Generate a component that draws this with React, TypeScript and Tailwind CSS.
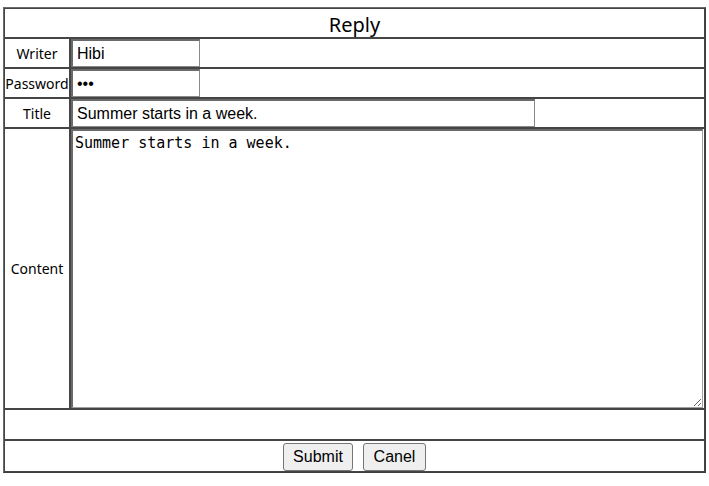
import React from "react";

const cell = "border border-[#454545] p-0";
const label =
  "border border-[#454545] p-0 w-[66px] text-center text-[14px] text-black whitespace-nowrap";
const inputCls =
  "block h-[28px] border-t-2 border-l-2 border-r border-b border-t-[#6a6a6a] border-l-[#6a6a6a] border-r-[#8a8a8a] border-b-[#8a8a8a] bg-white px-[4px] text-[16px] text-black outline-none [font-family:'Liberation_Sans',Arial,sans-serif]";

export default function App() {
  return (
    <div className="bg-white w-[709px] h-[486px] pt-[7px] pl-[3px] [font-family:'Noto_Sans',sans-serif]">
      <table className="w-[703px] border-separate border-spacing-0 border border-t-[#6a6a6a] border-l-[#6a6a6a] border-r-[#3c3c3c] border-b-[#3c3c3c]">
        <tbody>
          <tr>
            <td colSpan={2} className={`${cell} h-[30px] pt-[3px] text-center text-[20px] leading-[25px] text-black`}>
              Reply
            </td>
          </tr>
          <tr>
            <td className={`${label} h-[30px]`}>Writer</td>
            <td className={cell}>
              <input className={`${inputCls} w-[129px]`} defaultValue="Hibi" />
            </td>
          </tr>
          <tr>
            <td className={`${label} h-[30px]`}>Password</td>
            <td className={cell}>
              <input type="password" className={`${inputCls} w-[129px]`} defaultValue="123" />
            </td>
          </tr>
          <tr>
            <td className={`${label} h-[30px]`}>Title</td>
            <td className={cell}>
              <input className={`${inputCls} w-[464px]`} defaultValue="Summer starts in a week." />
            </td>
          </tr>
          <tr>
            <td className={label}>Content</td>
            <td className={cell}>
              <textarea
                className="block w-[632px] h-[279px] border-t-2 border-l-2 border-r border-b border-t-[#6a6a6a] border-l-[#6a6a6a] border-r-[#a0a0a0] border-b-[#a0a0a0] bg-white px-[2px] pt-[4px] text-[15px] leading-[17px] text-black outline-none [font-family:'DejaVu_Sans_Mono',monospace]"
                defaultValue="Summer starts in a week."
              />
            </td>
          </tr>
          <tr>
            <td colSpan={2} className={`${cell} h-[31px]`}></td>
          </tr>
          <tr>
            <td colSpan={2} className={`${cell} h-[32px] text-center`}>
              <div className="flex justify-center gap-[10px] pt-[2px]">
                <button className="h-[28px] w-[70px] rounded-[3px] border border-[#767676] bg-[#efefef] text-[16px] text-black [font-family:'Liberation_Sans',Arial,sans-serif]">
                  Submit
                </button>
                <button className="h-[28px] w-[63px] rounded-[3px] border border-[#767676] bg-[#efefef] text-[16px] text-black [font-family:'Liberation_Sans',Arial,sans-serif]">
                  Canel
                </button>
              </div>
            </td>
          </tr>
        </tbody>
      </table>
    </div>
  );
}
